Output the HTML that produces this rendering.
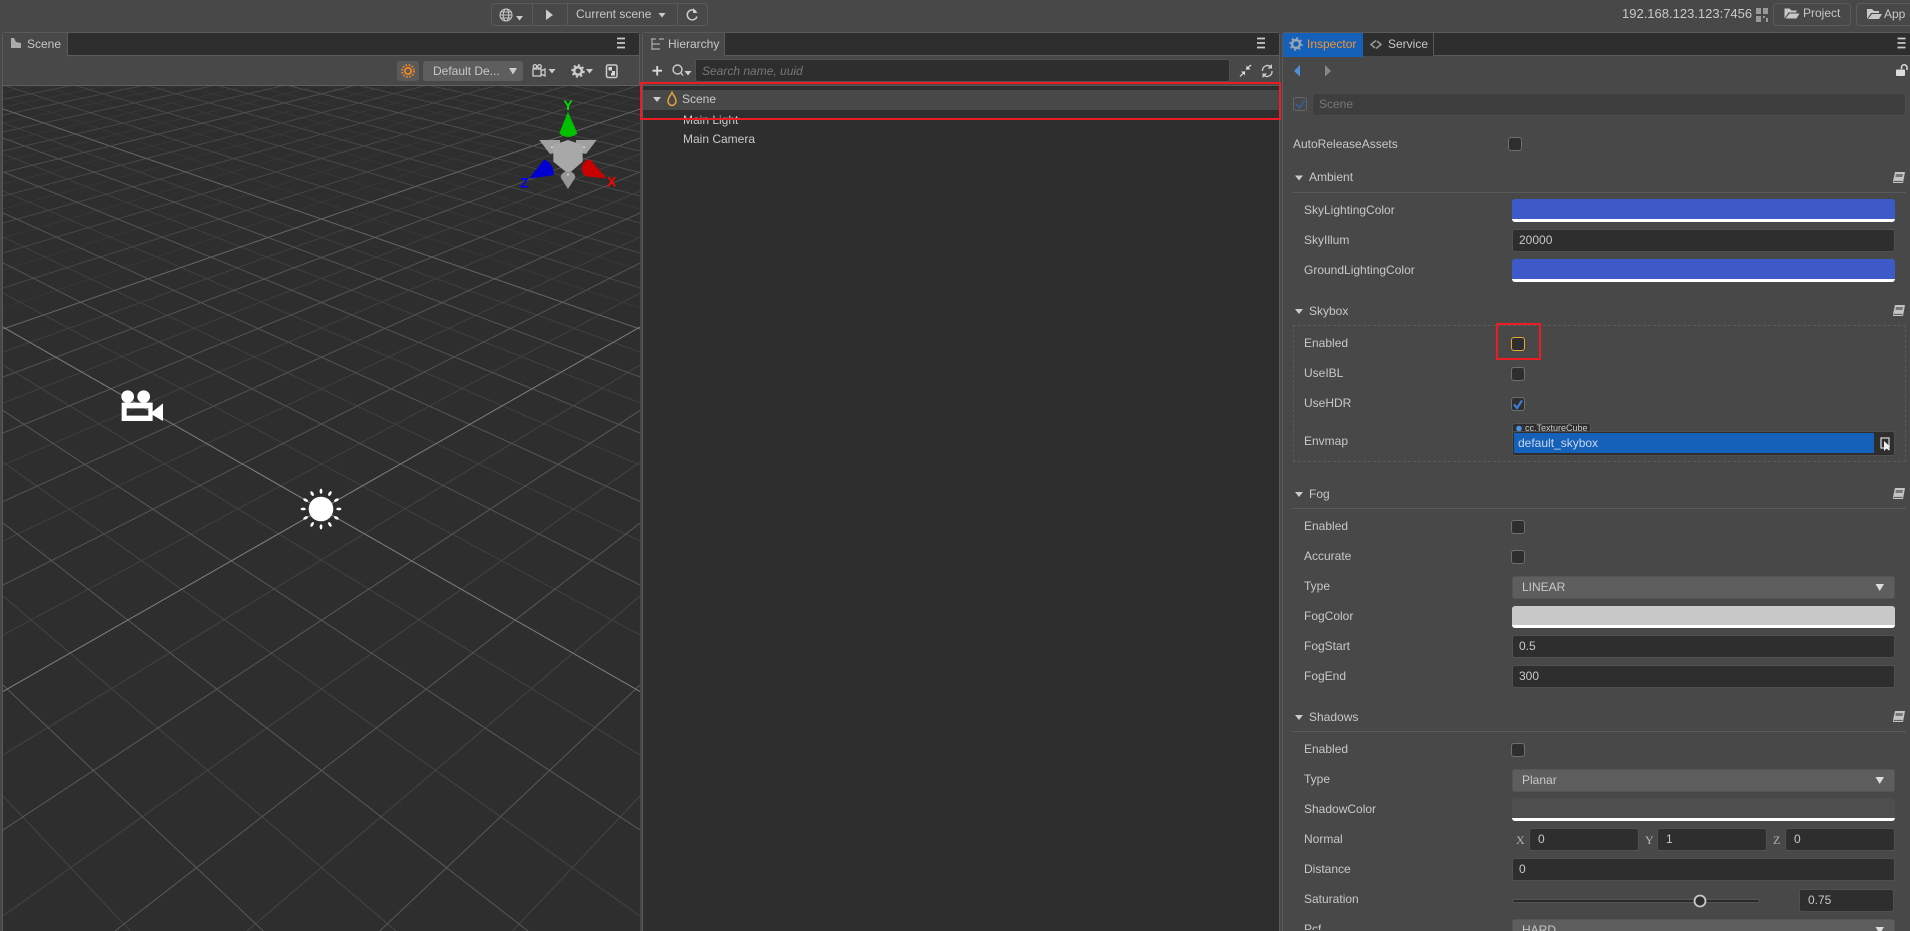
<!DOCTYPE html>
<html lang="en"><head><meta charset="utf-8"><title>Editor</title>
<style>
html,body{margin:0;padding:0;width:1910px;height:931px;overflow:hidden;background:#484848;font:12px "Liberation Sans",Arial,sans-serif;color:#c8c8c8}
div,span{box-sizing:border-box}
#root{position:relative;width:1910px;height:931px;overflow:hidden}
.a{position:absolute}
.t{position:absolute;line-height:16px;height:16px;white-space:nowrap}
.l{position:absolute;left:1304px;margin-top:-1px;line-height:16px;height:16px;white-space:nowrap;color:#c8c8c8}
.h{position:absolute;left:1309px;line-height:16px;height:16px;color:#c8c8c8}
.hr{position:absolute;left:1293px;width:613px;height:1px;background:#5a5a5a}
.inp{position:absolute;left:1512px;width:383px;height:23px;background:#2e2e2e;border:1px solid #505050;border-radius:3px;line-height:21px;padding-left:6px;color:#c8c8c8}
.sel{position:absolute;left:1512px;width:383px;height:23px;background:#5e5e5e;border:1px solid #555;border-radius:3px;line-height:21px;padding-left:9px;color:#c8c8c8}
.col{position:absolute;left:1512px;width:383px;height:23px;border-radius:3px;overflow:hidden;border-bottom:3px solid #fff}
.col i{display:block;height:100%;border-bottom:1px solid #333}
.cb{position:absolute;left:1511px;width:14px;height:14px;background:#2e2e2e;border:1px solid #6e6e6e;border-radius:3px}
.v{position:absolute;width:110px;height:23px;background:#2e2e2e;border:1px solid #505050;border-radius:3px;line-height:21px;padding-left:8px}
.x{position:absolute;font:12px "Liberation Serif",serif;color:#b4b4b4;line-height:14px}
</style></head><body><div id="root">

<!-- top bar -->
<div class="a" style="left:0;top:0;width:1910px;height:32px;background:#484848"></div>
<div class="a" style="left:491px;top:3px;width:217px;height:23px;border:1px solid #5a5a5a;border-radius:4px"></div>
<div class="a" style="left:532px;top:3px;width:1px;height:23px;background:#5a5a5a"></div>
<div class="a" style="left:567px;top:3px;width:1px;height:23px;background:#5a5a5a"></div>
<div class="a" style="left:677px;top:3px;width:1px;height:23px;background:#5a5a5a"></div>
<div class="t" style="left:576px;top:6px">Current scene</div>
<div class="t" style="left:1622px;top:6px;font-size:13px">192.168.123.123:7456</div>
<div class="a" style="left:1773px;top:3px;width:78px;height:23px;border:1px solid #5a5a5a;border-radius:4px"></div>
<div class="t" style="left:1803px;top:5px">Project</div>
<div class="a" style="left:1856px;top:3px;width:54px;height:23px;border:1px solid #5a5a5a;border-right:0;border-radius:4px 0 0 4px"></div>
<div class="t" style="left:1884px;top:6px">App</div>

<!-- scene panel -->
<div class="a" style="left:2px;top:32px;width:638px;height:899px;border:1px solid #5a5a5a;border-bottom:0;border-radius:3px 3px 0 0;background:#484848"></div>
<div class="a" style="left:3px;top:33px;width:636px;height:23px;background:#2e2e2e;border-bottom:1px solid #5a5a5a"></div>
<div class="a" style="left:3px;top:33px;width:65px;height:24px;background:#484848;border-right:1px solid #5a5a5a"></div>
<div class="t" style="left:27px;top:36px">Scene</div>
<div class="a" style="left:397px;top:61px;width:22px;height:20px;background:#5a5a5a;border-radius:3px"></div>
<div class="a" style="left:423px;top:61px;width:100px;height:20px;background:#5e5e5e;border-radius:3px"></div>
<div class="t" style="left:433px;top:63px">Default De...</div>
<div class="a" style="left:3px;top:85px;width:636px;height:1px;background:#5e5e5e"></div>

<svg class="a" style="left:3px;top:86px;background:#2e2e2e" width="637" height="845" viewBox="3 86 637 845">
<g fill="none" stroke-width="1">
<g stroke="#373737">
<path d="M3 96.5L640 308M3 74L640 270M3 54.5L640 238M3 37L640 209M3 22L640 184M3 8.6L640 161.6M3 -3.4L640 141.6M3 -14L640 123M3 -24.2L640 107M3 -33L640 92"/>
<path d="M3 308L640 96.5M3 270L640 74M3 238L640 54.5M3 209L640 37M3 184L640 22M3 161.6L640 8.6M3 141.6L640 -3.4M3 123L640 -14M3 107L640 -24.2M3 92L640 -33"/>
</g>
<g stroke="#404040">
<path d="M3 293L640 635M3 237L640 541M3 191L640 465M3 154L640 403M3 123L640 352"/>
<path d="M3 635L640 293M3 541L640 237M3 465L640 191M3 403L640 154M3 352L640 123"/>
</g>
<g stroke="#444444">
<path d="M3 796L130.4 931M3 596L396 931M3 462L640 916M3 365L640 755"/>
<path d="M512.6 931L640 796M247 931L640 596M3 916L640 462M3 755L640 365"/>
</g>
<g stroke="#474747">
<path d="M3 85L640 288M3 64L640 253M3 45.4L640 223M3 29.4L640 196M3 2.4L640 151M3 -9L640 132M3 -19.4L640 115M3 -28.8L640 99.4"/>
<path d="M3 288L640 85M3 253L640 64M3 223L640 45.4M3 196L640 29.4M3 151L640 2.4M3 132L640 -9M3 115L640 -19.4M3 99.4L640 -28.8"/>
</g>
<g stroke="#555555">
<path d="M3 263L640 585M3 213L640 501.5M3 172L640 433M3 138L640 377"/>
<path d="M3 585L640 263M3 501.5L640 213M3 433L640 172M3 377L640 138"/>
</g>
<g stroke="#595959">
<path d="M3 685L263.3 931M3 523L528 931M3 410.5L640 830"/>
<path d="M379.7 931L640 685M115 931L640 523M3 830L640 410.5"/>
</g>
<g stroke="#666666"><path d="M3 109L640 329M3 329L640 109"/></g>
<g stroke="#4e4e4e"><path d="M3 15L640 172.5M3 -37.4L640 85M3 172.5L640 15M3 85L640 -37.4"/></g>
<g stroke="#808080"><path d="M3 327L640 691.5M3 691.5L640 327"/></g>
</g>
</svg>

<!-- hierarchy -->
<div class="a" style="left:642px;top:32px;width:638px;height:899px;border:1px solid #5a5a5a;border-bottom:0;border-radius:3px 3px 0 0;background:#484848"></div>
<div class="a" style="left:643px;top:33px;width:636px;height:23px;background:#2e2e2e;border-bottom:1px solid #5a5a5a"></div>
<div class="a" style="left:643px;top:33px;width:82px;height:24px;background:#484848;border-right:1px solid #5a5a5a"></div>
<div class="t" style="left:668px;top:36px">Hierarchy</div>
<div class="a" style="left:695px;top:59px;width:535px;height:23px;background:#2e2e2e;border:1px solid #505050;border-radius:3px"></div>
<div class="t" style="left:702px;top:63px;font-style:italic;color:#777">Search name, uuid</div>
<div class="a" style="left:643px;top:85px;width:636px;height:846px;background:#2e2e2e;border-top:1px solid #5a5a5a"></div>
<div class="a" style="left:643px;top:90px;width:636px;height:20px;background:#484848"></div>
<div class="t" style="left:682px;top:91px">Scene</div>
<div class="t" style="left:683px;top:112px">Main Light</div>
<div class="t" style="left:683px;top:131px">Main Camera</div>

<!-- inspector -->
<div class="a" style="left:1282px;top:32px;width:628px;height:899px;border-left:1px solid #5a5a5a;border-top:1px solid #5a5a5a;border-radius:3px 0 0 0;background:#484848"></div>
<div class="a" style="left:1283px;top:33px;width:627px;height:23px;background:#2e2e2e;border-bottom:1px solid #5a5a5a"></div>
<div class="a" style="left:1283px;top:33px;width:80px;height:24px;background:#1560b8"></div>
<div class="t" style="left:1307px;top:36px;color:#f5952e">Inspector</div>
<div class="a" style="left:1363px;top:33px;width:71px;height:23px;background:#2e2e2e;border-right:1px solid #5a5a5a"></div>
<div class="t" style="left:1388px;top:36px">Service</div>

<div class="a" style="left:1293px;top:97px;width:14px;height:14px;border:1px solid #666;border-radius:3px;background:#484848"></div>
<div class="a" style="left:1312px;top:93px;width:594px;height:23px;background:#3e3e3e;border:1px solid #4c4c4c;border-radius:3px;line-height:21px;padding-left:6px;color:#777">Scene</div>
<div class="t" style="left:1293px;top:136px">AutoReleaseAssets</div>
<div class="cb" style="left:1508px;top:137px"></div>

<div class="h" style="top:169px">Ambient</div><div class="hr" style="top:192px"></div>
<div class="l" style="top:203px">SkyLightingColor</div>
<div class="col" style="top:199px"><i style="background:#3d5ac8"></i></div>
<div class="l" style="top:233px">SkyIllum</div>
<div class="inp" style="top:229px">20000</div>
<div class="l" style="top:263px">GroundLightingColor</div>
<div class="col" style="top:259px"><i style="background:#3d5ac8"></i></div>

<div class="h" style="top:303px">Skybox</div>
<div class="a" style="left:1293px;top:325px;width:613px;height:137px;border:1px dashed #5a5a5a"></div>
<div class="l" style="top:336px">Enabled</div>
<div class="cb" style="top:337px;border-color:#e8a630"></div>
<div class="l" style="top:366px">UseIBL</div>
<div class="cb" style="top:367px"></div>
<div class="l" style="top:396px">UseHDR</div>
<div class="cb" style="top:397px"></div>
<div class="l" style="top:434px">Envmap</div>
<div class="a" style="left:1512px;top:423px;width:79px;height:12px;background:#2e2e2e;border:1px solid #555;border-radius:3px 3px 0 0"></div>
<div class="t" style="left:1525px;top:420px;font-size:9px">cc.TextureCube</div>
<div class="a" style="left:1512px;top:431px;width:383px;height:25px;background:#2e2e2e;border:1px solid #505050;border-radius:3px"></div>
<div class="a" style="left:1514px;top:433px;width:360px;height:20px;background:#1560b8"></div>
<div class="t" style="left:1518px;top:435px;color:#c9d8ea">default_skybox</div>

<div class="h" style="top:486px">Fog</div><div class="hr" style="top:508px"></div>
<div class="l" style="top:519px">Enabled</div><div class="cb" style="top:520px"></div>
<div class="l" style="top:549px">Accurate</div><div class="cb" style="top:550px"></div>
<div class="l" style="top:579px">Type</div><div class="sel" style="top:576px">LINEAR</div>
<div class="l" style="top:609px">FogColor</div>
<div class="col" style="top:606px;height:22px"><i style="background:#c8c8c8"></i></div>
<div class="l" style="top:639px">FogStart</div><div class="inp" style="top:635px">0.5</div>
<div class="l" style="top:669px">FogEnd</div><div class="inp" style="top:665px">300</div>

<div class="h" style="top:709px">Shadows</div><div class="hr" style="top:731px"></div>
<div class="l" style="top:742px">Enabled</div><div class="cb" style="top:743px"></div>
<div class="l" style="top:772px">Type</div><div class="sel" style="top:769px">Planar</div>
<div class="l" style="top:802px">ShadowColor</div>
<div class="col" style="top:798px"><i style="background:#4e4e4e"></i></div>
<div class="l" style="top:832px">Normal</div>
<div class="x" style="left:1516px;top:833px">X</div><div class="v" style="left:1529px;top:828px">0</div>
<div class="x" style="left:1645px;top:833px">Y</div><div class="v" style="left:1657px;top:828px">1</div>
<div class="x" style="left:1773px;top:833px">Z</div><div class="v" style="left:1785px;top:828px">0</div>
<div class="l" style="top:862px">Distance</div><div class="inp" style="top:858px">0</div>
<div class="l" style="top:892px">Saturation</div>
<div class="a" style="left:1512px;top:899px;width:248px;height:4px;background:#2a2a2a;border:1px solid #555;border-radius:2px"></div>
<div class="inp" style="left:1799px;top:889px;width:95px;padding-left:8px">0.75</div>
<div class="l" style="top:922px;height:9px;overflow:hidden">Pcf</div><div class="sel" style="top:919px;height:12px;overflow:hidden;border-radius:3px 3px 0 0;border-bottom:0">HARD</div>

<!-- icon overlay -->
<svg class="a" style="left:0;top:0" width="1910" height="931" viewBox="0 0 1910 931">
<defs>
<g id="book"><path d="M-4-6H6L4 5H-6V3Z" fill="#c4c4c4"/><path d="M-3-4H4L3.4-1H-3.6Z" fill="#777"/><path d="M-5.4 3.4H3.6" stroke="#555" stroke-width="1"/></g>
<g id="menu"><path d="M-4-4.5H4M-4 0H4M-4 4.5H4" stroke="#c8c8c8" stroke-width="1.7" fill="none"/></g>
<g id="fold"><path d="M-7-5H-2L0-3H5V-1H-3L-7 5ZM-2 0H8L5 5H-6Z" fill="#c8c8c8"/></g>
<path id="dn" d="M-3.5-2H3.5L0 2.5Z" fill="#ccc"/>
</defs>
<!-- top bar icons -->
<g transform="translate(506 15)" fill="none" stroke="#ccc" stroke-width="1"><circle r="6"/><ellipse rx="2.8" ry="6"/><path d="M-6 0H6M-5.3-3H5.3M-5.3 3H5.3"/></g>
<use href="#dn" x="519.5" y="18"/>
<path d="M546 9.5L553 15 546 20Z" fill="#ccc"/>
<use href="#dn" x="662" y="15"/>
<path d="M696 11.5A5 5 0 1 0 697 16.5" fill="none" stroke="#ccc" stroke-width="1.5"/><path d="M693 8V13H697.5Z" fill="#ccc"/>
<g fill="#999"><rect x="1756" y="8" width="5" height="6"/><rect x="1763" y="8" width="5" height="6"/><rect x="1756" y="16" width="5" height="6"/><rect x="1763" y="16" width="2" height="2"/><rect x="1766" y="18" width="2" height="4"/></g>
<use href="#fold" x="1791.5" y="13.5"/>
<use href="#fold" x="1874" y="14"/>
<!-- tabs -->
<path d="M11 38V48H21V43L16 42 14 38Z" fill="#aaa"/>
<use href="#menu" x="621" y="43"/><use href="#menu" x="1261" y="43"/><use href="#menu" x="1901.5" y="43"/>
<g fill="none" stroke="#aaa" stroke-width="1.2"><path d="M651 39H656M659 39H664M652 39V50M652 44H660M652 49H660"/></g>
<g transform="translate(1296 44)"><circle r="4" fill="none" stroke="#9aa6b4" stroke-width="2.4"/><circle r="6" fill="none" stroke="#9aa6b4" stroke-width="1.4" stroke-dasharray="2 2.7"/></g>
<g fill="none" stroke="#999" stroke-width="1.5"><path d="M1376 40.5L1371 44.5 1375 48M1376 48.5L1381 44.5 1377 41"/></g>
<!-- scene toolbar -->
<g transform="translate(408 71)" fill="none" stroke="#f08a24"><circle r="3.2" stroke-width="1.8"/><circle r="6" stroke-width="1.8" stroke-dasharray="1.6 1.6"/></g>
<path d="M509 68H517L513 74.5Z" fill="#ccc"/>
<g fill="none" stroke="#ccc" stroke-width="1.3"><rect x="533" y="69" width="8" height="7"/><circle cx="535" cy="66.5" r="1.8"/><circle cx="539.5" cy="66.5" r="1.8"/><path d="M541 71L545 69V76L541 74"/></g>
<use href="#dn" x="552" y="71"/>
<g transform="translate(578 71)"><circle r="3.8" fill="none" stroke="#ccc" stroke-width="2.5"/><circle r="5.8" fill="none" stroke="#ccc" stroke-width="1.8" stroke-dasharray="2.2 2.3"/></g>
<use href="#dn" x="589.5" y="71"/>
<g fill="none" stroke="#ccc" stroke-width="1.5"><rect x="606.5" y="65" width="10.5" height="12.5" rx="1.5"/></g><path d="M608.5 67H612V70.5H608.5ZM612 71H615V75.5H611V73H612Z" fill="#d8d8d8"/>
<!-- hierarchy toolbar -->
<path d="M652.5 70.7H662M657.2 66V75.5" stroke="#ddd" stroke-width="1.8" fill="none"/>
<g fill="none" stroke="#ccc" stroke-width="1.4"><circle cx="677.5" cy="69.5" r="4.5"/><path d="M681 73L683 75.5"/></g><use href="#dn" x="688" y="73"/>
<g fill="none" stroke="#ddd" stroke-width="1.2"><path d="M1240 76.5L1245 71.5M1246 69.5L1251 65"/></g><path d="M1245 75.5V71.5H1241ZM1246.5 65.5V69.5H1250.5Z" fill="#ddd"/>
<g fill="none" stroke="#ccc" stroke-width="1.3"><path d="M1262.5 71A5 5 0 0 1 1271 67M1272 71A5 5 0 0 1 1263.5 75"/></g><path d="M1272 64V68.5H1267.5ZM1262.5 78V73.5H1267Z" fill="#ccc"/>
<!-- tree -->
<path d="M653 97H661L657 102Z" fill="#ccc"/>
<path d="M672 92.5C673 95 676 97.5 676 101A4 4.5 0 0 1 668 101C668 97.5 671 95 672 92.5Z" fill="none" stroke="#e8a33c" stroke-width="1.5"/>
<!-- inspector nav -->
<path d="M1300 65V76.5L1294 71Z" fill="#4d8fe0"/>
<path d="M1325 65V76.5L1331 71Z" fill="#888"/>
<rect x="1896" y="69.5" width="9" height="6.5" rx="1" fill="#ddd"/><path d="M1901.5 69V67.5A2.7 2.7 0 0 1 1907 67.5V70" fill="none" stroke="#ddd" stroke-width="1.5"/>
<path d="M1296.5 104L1299.5 108 1304.5 100.5" fill="none" stroke="#3a5a90" stroke-width="2"/>
<!-- section arrows + book -->
<g fill="#ccc"><path d="M1295 175.5H1303L1299 180.5Z"/><path d="M1295 309H1303L1299 314Z"/><path d="M1295 492H1303L1299 497Z"/><path d="M1295 715H1303L1299 720Z"/></g>
<use href="#book" x="1899" y="178"/><use href="#book" x="1899" y="311"/><use href="#book" x="1899" y="494"/><use href="#book" x="1899" y="717"/>
<!-- select arrows -->
<path d="M1875.5 584H1884L1879.7 591Z" fill="#ddd"/><path d="M1875.5 777H1884L1879.7 784Z" fill="#ddd"/><path d="M1875.5 927H1884L1881.5 931H1878Z" fill="#ddd"/>
<!-- check -->
<path d="M1514 404.5L1517 408 1522 400.5" fill="none" stroke="#3d7bd8" stroke-width="2.2"/>
<!-- envmap -->
<circle cx="1519" cy="428.5" r="2.8" fill="#4d8fe0"/>
<rect x="1881" y="438" width="8" height="10" fill="none" stroke="#ddd" stroke-width="1.2"/><path d="M1884 441V451L1886.5 448.5 1889 450.5 1890 449.5 1888 447.5 1890 446.5Z" fill="#eee"/>
<!-- slider handle -->
<circle cx="1700" cy="901" r="5.5" fill="#2e2e2e" stroke="#c8c8c8" stroke-width="1.8"/>
<!-- camera gizmo -->
<g transform="translate(100 370) scale(.3333)" fill="#fff">
<circle cx="83" cy="80" r="19"/><circle cx="131" cy="80" r="19"/>
<path fill-rule="evenodd" d="M65 98H158V125L189 100V153L158 135V153H65ZM80 115V137H145V115Z"/>
</g>
<!-- sun gizmo -->
<g transform="translate(321 509)" fill="#fff">
<circle r="12.3"/>
<ellipse cy="-17.8" rx="1.4" ry="2.6"/><ellipse cy="-17.8" rx="1.4" ry="2.6" transform="rotate(30)"/><ellipse cy="-17.8" rx="1.4" ry="2.6" transform="rotate(60)"/><ellipse cy="-17.8" rx="1.4" ry="2.6" transform="rotate(90)"/><ellipse cy="-17.8" rx="1.4" ry="2.6" transform="rotate(120)"/><ellipse cy="-17.8" rx="1.4" ry="2.6" transform="rotate(150)"/><ellipse cy="-17.8" rx="1.4" ry="2.6" transform="rotate(180)"/><ellipse cy="-17.8" rx="1.4" ry="2.6" transform="rotate(210)"/><ellipse cy="-17.8" rx="1.4" ry="2.6" transform="rotate(240)"/><ellipse cy="-17.8" rx="1.4" ry="2.6" transform="rotate(270)"/><ellipse cy="-17.8" rx="1.4" ry="2.6" transform="rotate(300)"/><ellipse cy="-17.8" rx="1.4" ry="2.6" transform="rotate(330)"/>
</g>
<!-- axis gizmo -->
<g transform="translate(500 90) scale(.3333)">
<path d="M204 65C214 90 226 115 232 130Q205 152 178 130C184 115 194 90 204 65Z" fill="#00c000"/>
<path d="M118 150L180 150 182 185 150 192Z" fill="#a0a0a0"/>
<path d="M290 150L228 150 226 185 258 192Z" fill="#a0a0a0"/>
<path d="M204 150L248 165 248 215 205 252 160 215 160 165Z" fill="#a8a8a8"/>
<path d="M204 297L182 262Q184 245 204 245 224 245 226 262Z" fill="#969696"/>
<path d="M88 265L133 208Q160 220 162 255Q125 262 88 265Z" fill="#0000d0"/>
<path d="M320 265L270 208Q248 212 245 235 246 255 262 260Z" fill="#c80000"/>
<circle cx="156" cy="172" r="2.5" fill="#eee"/><circle cx="252" cy="172" r="2.5" fill="#eee"/><circle cx="204" cy="254" r="2.5" fill="#eee"/>
<text x="204" y="60" text-anchor="middle" font-family="Liberation Sans" font-weight="bold" font-size="42" fill="#00e000">Y</text>
<text x="73" y="292" text-anchor="middle" font-family="Liberation Sans" font-weight="bold" font-size="42" fill="#0000ff">Z</text>
<text x="335" y="290" text-anchor="middle" font-family="Liberation Sans" font-weight="bold" font-size="42" fill="#ff0000">X</text>
</g>
</svg>

<!-- annotation boxes -->
<div class="a" style="left:640px;top:82px;width:641px;height:38px;border:2px solid #ed1c24"></div>
<div class="a" style="left:1496px;top:323px;width:45px;height:37px;border:2px solid #ed1c24"></div>
</div></body></html>
